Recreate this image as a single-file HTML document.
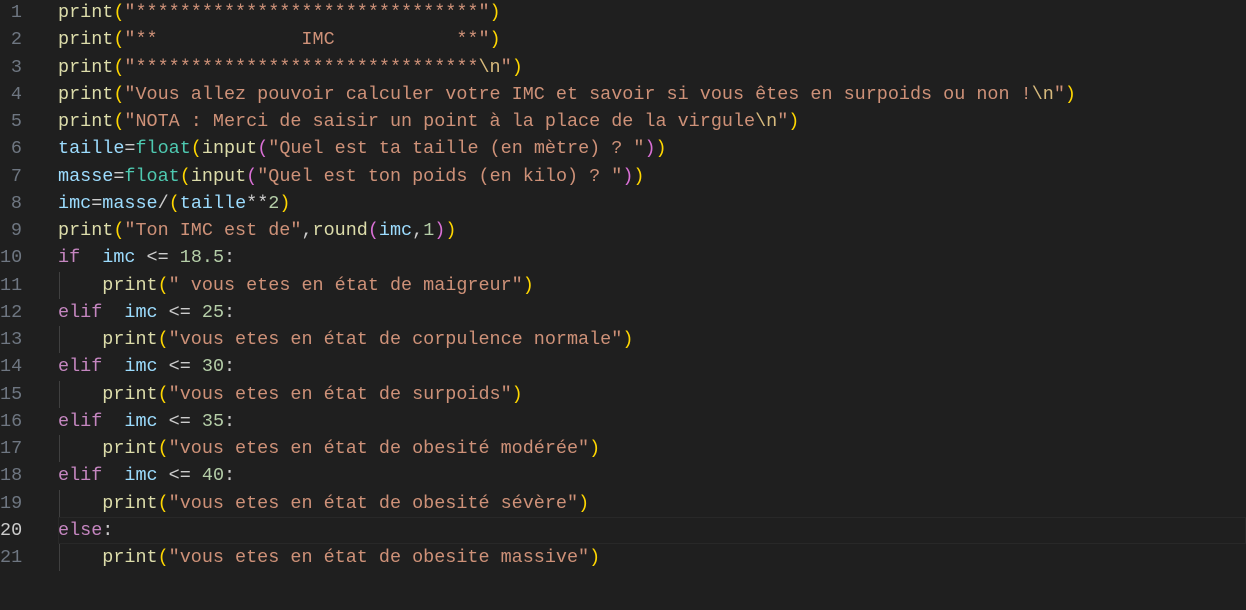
<!DOCTYPE html>
<html><head><meta charset="utf-8"><style>
html,body{margin:0;padding:0;background:#1f1f1f;width:1246px;height:610px;overflow:hidden}
.ln{position:absolute;left:0;top:-1px;width:22px;text-align:right;font:18.45px/27.25px "Liberation Mono",monospace;color:#6e7681}
.ln div{height:27.25px}
.code{position:absolute;left:58px;top:-1px;font:18.45px/27.25px "Liberation Mono",monospace;color:#cccccc;white-space:pre}
.code div{height:27.25px}
.f{color:#dcdcaa}.s{color:#ce9178}.v{color:#9cdcfe}.k{color:#c586c0}.n{color:#b5cea8}.b1{color:#ffd700}.b2{color:#da70d6}.e{color:#d7ba7d}
.cur{position:absolute;left:58px;right:0;top:517px;height:25px;border:1px solid #282828}
.g{position:absolute;left:59px;width:1px;background:#404040;height:27.25px}
</style></head><body>
<div class="cur"></div>
<div class="g" style="top:271.5px"></div>
<div class="g" style="top:326px"></div>
<div class="g" style="top:380.5px"></div>
<div class="g" style="top:435px"></div>
<div class="g" style="top:489.5px"></div>
<div class="g" style="top:544px"></div>
<div class="ln"><div>1</div><div>2</div><div>3</div><div>4</div><div>5</div><div>6</div><div>7</div><div>8</div><div>9</div><div>10</div><div>11</div><div>12</div><div>13</div><div>14</div><div>15</div><div>16</div><div>17</div><div>18</div><div>19</div><div style="color:#cccccc">20</div><div>21</div></div>
<div class="code"><div><span class="f">print</span><span class="b1">(</span><span class="s">"*******************************"</span><span class="b1">)</span></div><div><span class="f">print</span><span class="b1">(</span><span class="s">"**             IMC           **"</span><span class="b1">)</span></div><div><span class="f">print</span><span class="b1">(</span><span class="s">"*******************************</span><span class="e">\n</span><span class="s">"</span><span class="b1">)</span></div><div><span class="f">print</span><span class="b1">(</span><span class="s">"Vous allez pouvoir calculer votre IMC et savoir si vous êtes en surpoids ou non !</span><span class="e">\n</span><span class="s">"</span><span class="b1">)</span></div><div><span class="f">print</span><span class="b1">(</span><span class="s">"NOTA : Merci de saisir un point à la place de la virgule</span><span class="e">\n</span><span class="s">"</span><span class="b1">)</span></div><div><span class="v">taille</span>=<span style="color:#4ec9b0">float</span><span class="b1">(</span><span class="f">input</span><span class="b2">(</span><span class="s">"Quel est ta taille (en mètre) ? "</span><span class="b2">)</span><span class="b1">)</span></div><div><span class="v">masse</span>=<span style="color:#4ec9b0">float</span><span class="b1">(</span><span class="f">input</span><span class="b2">(</span><span class="s">"Quel est ton poids (en kilo) ? "</span><span class="b2">)</span><span class="b1">)</span></div><div><span class="v">imc</span>=<span class="v">masse</span>/<span class="b1">(</span><span class="v">taille</span>**<span class="n">2</span><span class="b1">)</span></div><div><span class="f">print</span><span class="b1">(</span><span class="s">"Ton IMC est de"</span>,<span class="f">round</span><span class="b2">(</span><span class="v">imc</span>,<span class="n">1</span><span class="b2">)</span><span class="b1">)</span></div><div><span class="k">if</span>  <span class="v">imc</span> &lt;= <span class="n">18.5</span>:</div><div>    <span class="f">print</span><span class="b1">(</span><span class="s">" vous etes en état de maigreur"</span><span class="b1">)</span></div><div><span class="k">elif</span>  <span class="v">imc</span> &lt;= <span class="n">25</span>:</div><div>    <span class="f">print</span><span class="b1">(</span><span class="s">"vous etes en état de corpulence normale"</span><span class="b1">)</span></div><div><span class="k">elif</span>  <span class="v">imc</span> &lt;= <span class="n">30</span>:</div><div>    <span class="f">print</span><span class="b1">(</span><span class="s">"vous etes en état de surpoids"</span><span class="b1">)</span></div><div><span class="k">elif</span>  <span class="v">imc</span> &lt;= <span class="n">35</span>:</div><div>    <span class="f">print</span><span class="b1">(</span><span class="s">"vous etes en état de obesité modérée"</span><span class="b1">)</span></div><div><span class="k">elif</span>  <span class="v">imc</span> &lt;= <span class="n">40</span>:</div><div>    <span class="f">print</span><span class="b1">(</span><span class="s">"vous etes en état de obesité sévère"</span><span class="b1">)</span></div><div><span class="k">else</span>:</div><div>    <span class="f">print</span><span class="b1">(</span><span class="s">"vous etes en état de obesite massive"</span><span class="b1">)</span></div></div>
</body></html>
